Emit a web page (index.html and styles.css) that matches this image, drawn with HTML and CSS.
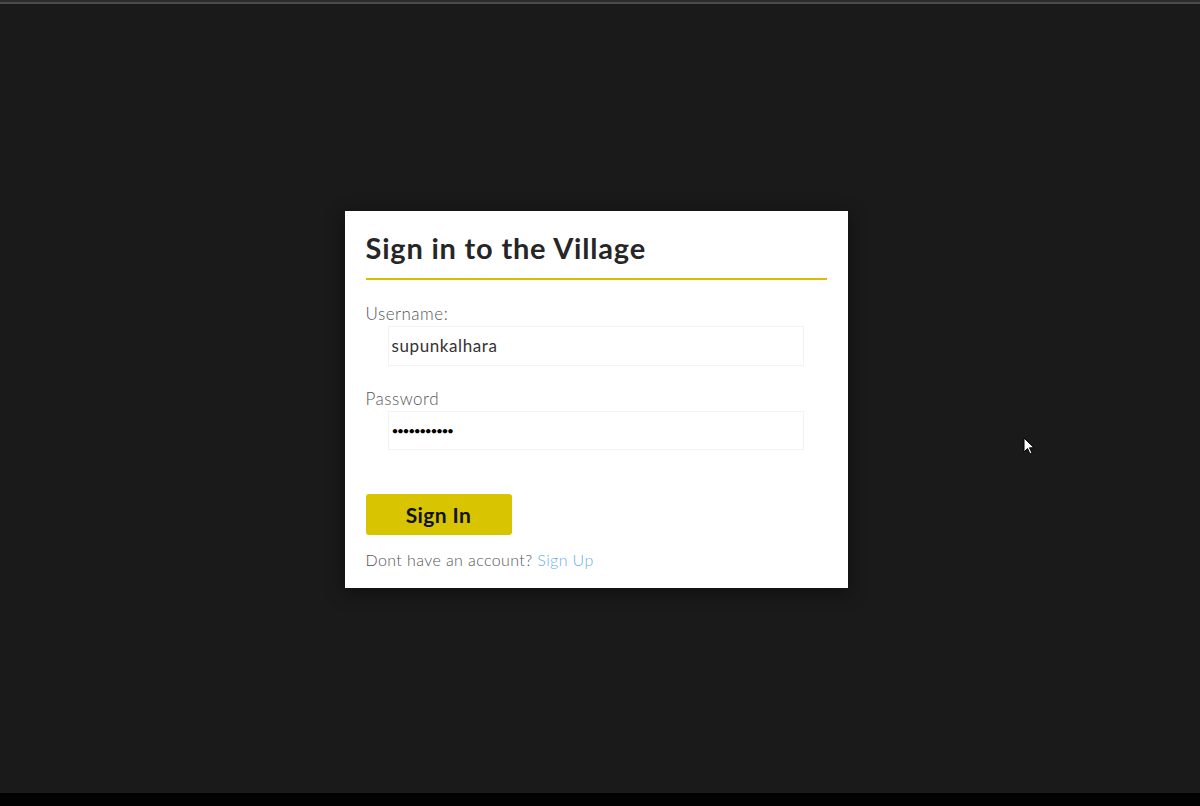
FILE: index.html
```html
<!DOCTYPE html>
<html lang="en">
<head>
<meta charset="utf-8">
<title>Sign in to the Village</title>
<link rel="stylesheet" href="styles.css">
</head>
<body>
<div class="screen">
  <main class="stage">
    <form class="card">
      <h1 class="title">Sign in to the Village</h1>
      <label class="label" for="user">Username:</label>
      <input class="field" id="user" type="text" value="supunkalhara">
      <label class="label label-pass" for="pass">Password</label>
      <input class="field field-pass" id="pass" type="password" value="supunkalhar">
      <button class="btn" type="button">Sign In</button>
      <p class="note">Dont have an account? <a class="link" href="#">Sign Up</a></p>
    </form>
    <svg class="cursor" width="12" height="19" viewBox="0 0 12 19"><path d="M1 1 L1 15 L4.5 11.5 L7 17 L9 16 L6.5 10.8 L11 10.8 Z" fill="#fff" stroke="#000" stroke-width="1"/></svg>
  </main>
  <div class="bottom"></div>
</div>
</body>
</html>
```
FILE: styles.css
```css
html, body {
  margin: 0;
  padding: 0;
  background: #1a1a1a;
}
.screen {
  width: 1200px;
  height: 806px;
  display: flex;
  flex-direction: column;
  border-top: 2px solid #2c2c2c;
  box-sizing: border-box;
  font-family: Lato, "Open Sans", sans-serif;
}
.stage {
  position: relative;
  flex: 1;
  border-top: 2px solid #4a4a4a;
  background: #1a1a1a;
  display: flex;
  align-items: center;
  justify-content: center;
}
.bottom {
  height: 13px;
  background: #020202;
}
.card {
  width: 503px;
  box-sizing: border-box;
  background: #fff;
  padding: 20px 21px 16px;
  display: flex;
  flex-direction: column;
  align-items: flex-start;
  box-shadow: 0 4px 18px rgba(0,0,0,0.45);
  margin-left: -8px;
  margin-top: 1px;
}
.title {
  align-self: stretch;
  margin: 0;
  font-size: 29px;
  line-height: 34px;
  font-weight: 700;
  color: #262626;
  padding-bottom: 13px;
  border-bottom: 2px solid #d6c100;
  letter-spacing: 0.8px;
}
.label {
  margin-top: 22px;
  font-size: 17px;
  line-height: 24px;
  color: #555;
  font-weight: 300;
  letter-spacing: 0.5px;
}
.label-pass {
  margin-top: 21px;
}
.field {
  margin-left: 22px;
  width: 416px;
  height: 40px;
  box-sizing: border-box;
  border: 1px solid #f3f3f3;
  padding: 0 3px;
  font-family: Lato, "Open Sans", sans-serif;
  font-size: 17px;
  letter-spacing: 0.6px;
  color: #333;
  background: #fff;
  outline: none;
}
.field-pass {
  height: 39px;
  font-size: 12px;
  color: #000;
  letter-spacing: -1.4px;
}
.btn {
  margin-top: 44px;
  width: 146px;
  height: 41px;
  background: #d8c400;
  border: none;
  border-radius: 3px;
  font-family: Lato, "Open Sans", sans-serif;
  font-size: 21px;
  font-weight: 700;
  letter-spacing: 0.4px;
  color: #111;
  cursor: pointer;
}
.note {
  margin: 13px 0 0;
  font-size: 16px;
  line-height: 24px;
  color: #555;
  font-weight: 300;
  letter-spacing: 0.4px;
}
.link {
  color: #6aaef0;
  text-decoration: none;
}
.cursor {
  position: absolute;
  left: 1023px;
  top: 433px;
}
```
